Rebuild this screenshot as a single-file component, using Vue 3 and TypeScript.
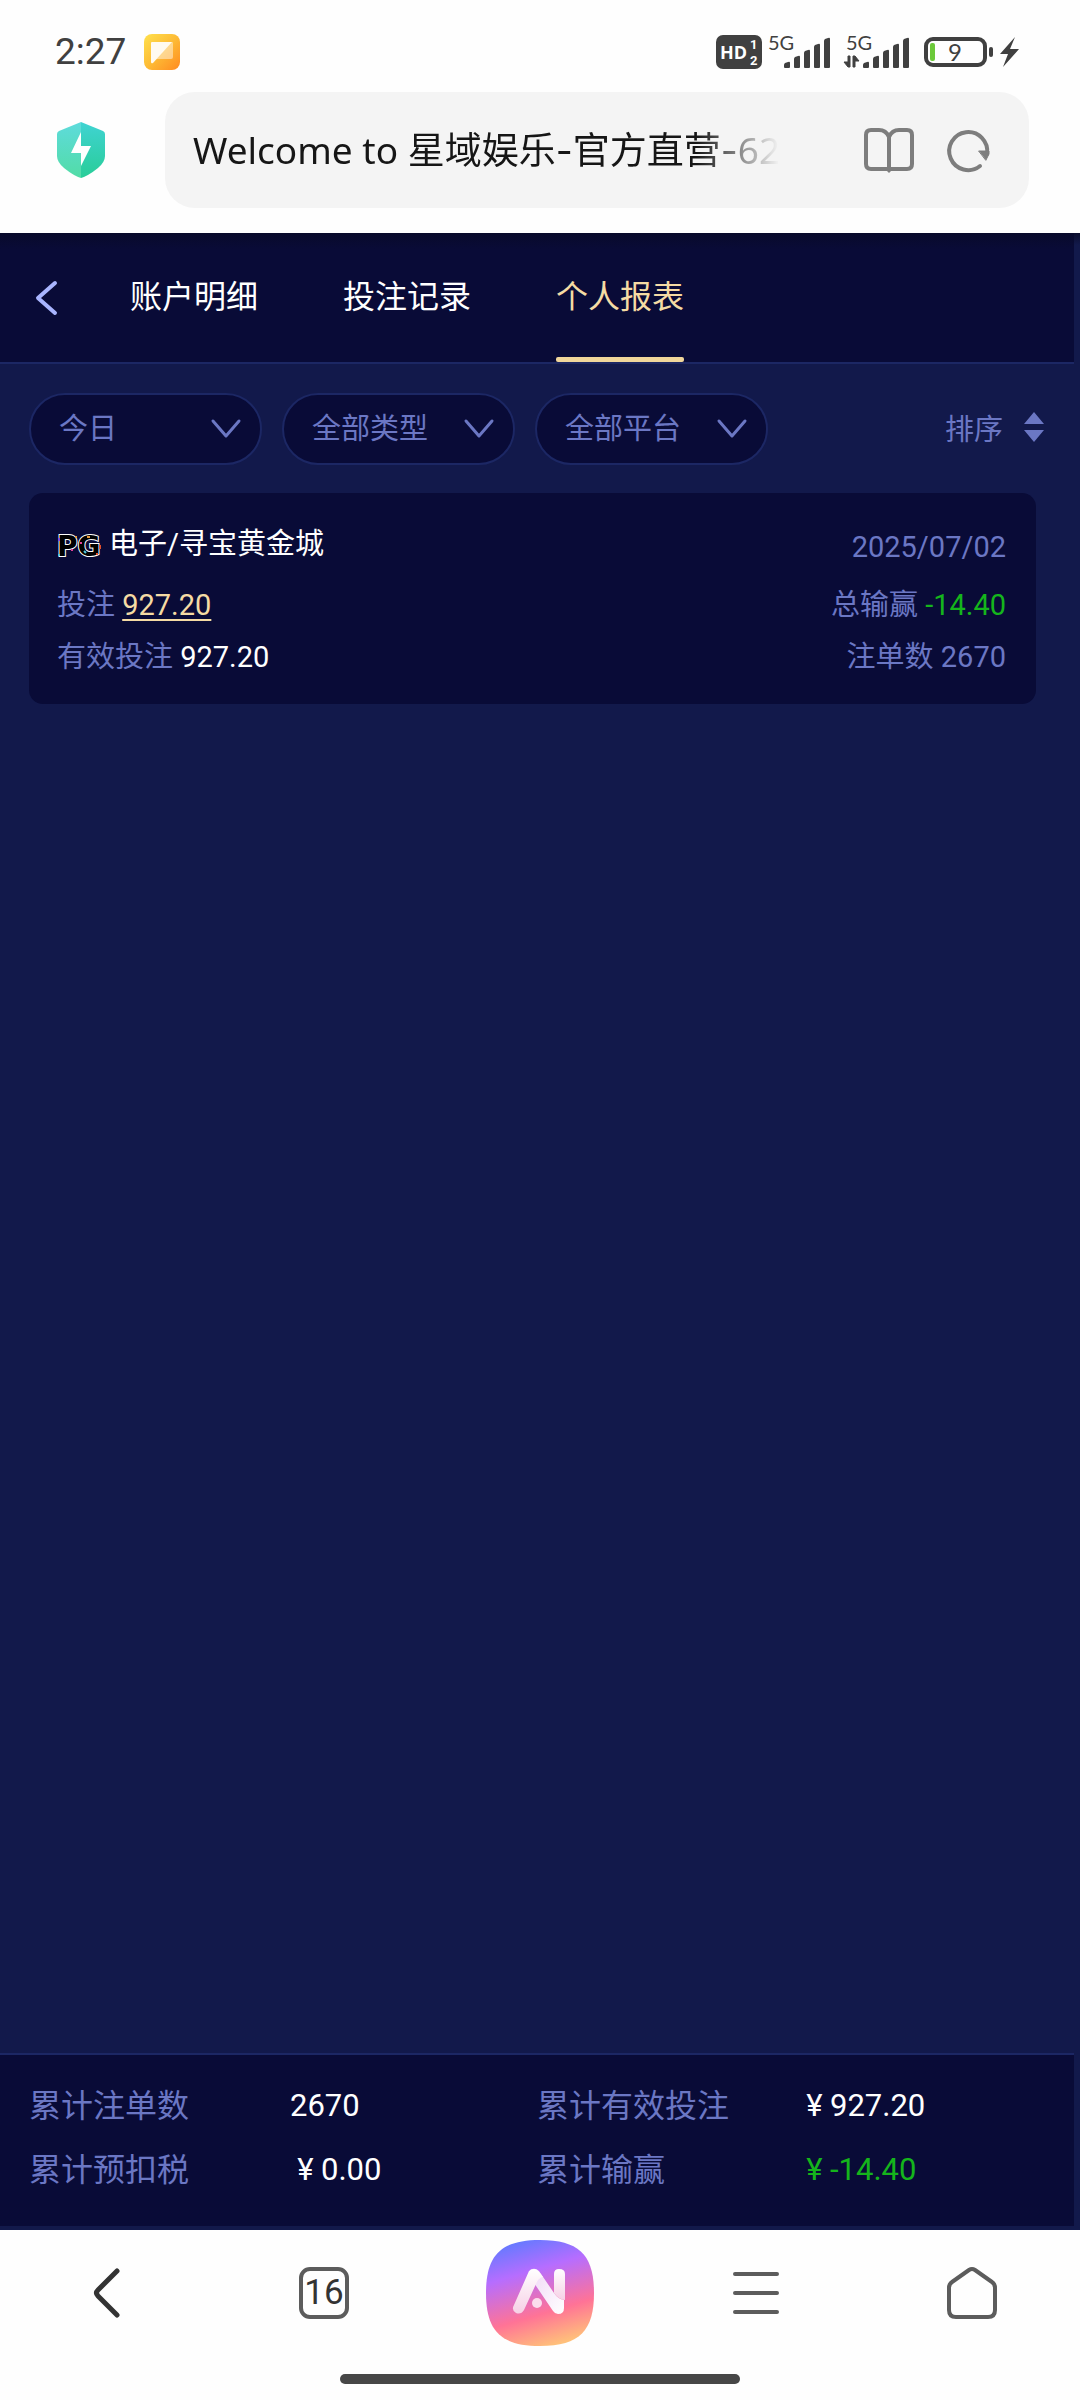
<script setup lang="ts">
import { ref } from 'vue'

interface Filter {
  id: string
  label: string
  options: string[]
}

interface Total {
  label: string
  value: string
  money?: boolean
  loss?: boolean
}

const tabs: string[] = ['账户明细', '投注记录', '个人报表']
const activeTab = ref(2)

const filters: Filter[] = [
  { id: 'period', label: '时间', options: ['今日'] },
  { id: 'kind', label: '类型', options: ['全部类型'] },
  { id: 'platform', label: '平台', options: ['全部平台'] },
]

const totals: Total[] = [
  { label: '累计注单数', value: '2670' },
  { label: '累计有效投注', value: '927.20', money: true },
  { label: '累计预扣税', value: '0.00', money: true },
  { label: '累计输赢', value: '-14.40', money: true, loss: true },
]

const barTops: number[] = [25, 19, 13, 7, 1]
const bar = (i: number): string => {
  const x = i * 10
  const top = barTops[i]
  return `M${x} 31V${top + 3}q0-1 1-2L${x + 4} ${top}q2-1 2 1V30q0 1-1 1H${x + 1}q-1 0-1-1z`
}
</script>

<template>
  <div class="screen">
    <header class="status">
      <div class="status-side">
        <time class="clock">2:27</time>
        <svg class="note" width="36" height="36" viewBox="0 0 36 36" aria-hidden="true">
          <defs>
            <linearGradient id="note" x1="0" y1="0" x2="1" y2="1">
              <stop offset="0" stop-color="#ffe14d" />
              <stop offset="0.5" stop-color="#fdbb35" />
              <stop offset="1" stop-color="#ff8a20" />
            </linearGradient>
          </defs>
          <rect width="36" height="36" rx="8" fill="url(#note)" />
          <path d="M27 8h1q1 0 1 1v14q0 2-2 2H12z" fill="#fff" opacity="0.45" />
          <path d="M8 8h20L9 29q-2 1-2-1V9q0-1 1-1z" fill="#fffaf0" />
        </svg>
      </div>
      <svg class="signals" width="304" height="36" viewBox="0 0 304 36" role="img" aria-label="5G, 9%">
        <rect x="0" y="1" width="46" height="34" rx="7" fill="#404040" />
        <text x="4" y="25" class="hd">HD</text>
        <text x="34" y="15" class="hd-small">1</text>
        <text x="34" y="31" class="hd-small">2</text>
        <text x="52" y="16" class="net">5G</text>
        <g transform="translate(68 3)" fill="#404040"><path v-for="(_, i) in barTops" :key="i" :d="bar(i)" /></g>
        <text x="130" y="16" class="net">5G</text>
        <path d="M128 28h4v-6h2v11h-2zM137 33V22h2l4 5h-4v6z" fill="#404040" stroke="#404040" />
        <g transform="translate(147 3)" fill="#404040"><path v-for="(_, i) in barTops" :key="i" :d="bar(i)" /></g>
        <rect x="210" y="5" width="59" height="26" rx="7" fill="none" stroke="#404040" stroke-width="4" />
        <rect x="214" y="9" width="5" height="18" rx="2" fill="#6cc93a" />
        <text x="239" y="27" class="level">9</text>
        <rect x="273" y="13" width="4" height="10" rx="2" fill="#404040" />
        <path d="M299 3L284 20h8l-5 13 16-18h-9z" fill="#404040" />
      </svg>
    </header>

    <div class="address">
      <svg class="shield" width="48" height="56" viewBox="0 0 48 56" aria-hidden="true">
        <defs>
          <linearGradient id="sl" x1="0" y1="0" x2="0" y2="1">
            <stop offset="0" stop-color="#5edbdc" />
            <stop offset="1" stop-color="#52dca6" />
          </linearGradient>
          <linearGradient id="sr" x1="0" y1="0" x2="0" y2="1">
            <stop offset="0" stop-color="#40d3d2" />
            <stop offset="1" stop-color="#28cd98" />
          </linearGradient>
        </defs>
        <path d="M24 0L2 9q-2 1-2 3v22q0 6 7 12 10 8 17 10z" fill="url(#sl)" />
        <path d="M24 0l22 9q2 1 2 3v22q0 6-7 12-10 8-17 10z" fill="url(#sr)" />
        <path d="M24 10L14 31h10v13l10-20H24z" fill="#fff" />
      </svg>
      <div class="field">
        <button type="button" class="page-title">Welcome to 星域娱乐<span class="dash">-</span>官方直营<span class="dash">-</span>62</button>
        <button type="button" class="icon" aria-label="阅读模式">
          <svg width="50" height="46" viewBox="0 0 50 46" fill="none" stroke="#7d7d7d" stroke-width="4" stroke-linejoin="round">
            <path d="M25 9Q22 2 15 2H7Q2 2 2 7V36Q2 41 7 41H43Q48 41 48 36V7Q48 2 43 2H35Q28 2 25 9zM25 8V42" />
            <path d="M21 41h8l-4 4z" fill="#7d7d7d" stroke="none" />
          </svg>
        </button>
        <button type="button" class="icon" aria-label="刷新">
          <svg width="44" height="44" viewBox="0 0 44 44" fill="none" stroke="#7d7d7d" stroke-width="4" stroke-linecap="round">
            <path d="M33 37A19 19 0 1 1 40 25" />
            <path d="M32 22h10v3l-3 6z" fill="#7d7d7d" stroke-width="1" stroke-linejoin="round" />
          </svg>
        </button>
      </div>
    </div>

    <main class="page">
      <nav class="tabs">
        <button type="button" class="back" aria-label="返回">
          <svg width="24" height="36" viewBox="0 0 24 36" fill="none" stroke="#a9b5ff" stroke-width="4" stroke-linecap="round" stroke-linejoin="round">
            <path d="M21 3L4 18l17 15" />
          </svg>
        </button>
        <button
          v-for="(tab, i) in tabs"
          :key="tab"
          type="button"
          class="tab"
          :class="{ active: i === activeTab }"
          @click="activeTab = i"
        >{{ tab }}</button>
      </nav>

      <div class="filters">
        <label v-for="f in filters" :key="f.id" class="pill">
          <select :id="f.id" :aria-label="f.label">
            <option v-for="o in f.options" :key="o">{{ o }}</option>
          </select>
          <svg class="chevron" width="32" height="20" viewBox="0 0 32 20" fill="none" stroke="#6b77c4" stroke-width="3" stroke-linecap="round" stroke-linejoin="round">
            <path d="M3 2l13 15L29 2" />
          </svg>
        </label>
        <button type="button" class="sort">
          排序
          <svg width="20" height="30" viewBox="0 0 20 30" fill="#6b77c4" aria-hidden="true">
            <path d="M10 0l10 12H0zM0 18h20L10 30z" />
          </svg>
        </button>
      </div>

      <section class="list">
        <article class="card">
          <div class="row first">
            <h2 class="game">
              <svg class="brand" width="46" height="24" viewBox="0 0 46 24" role="img" aria-label="PG">
                <text x="0" y="22" class="brand-text">PG</text>
                <g stroke-width="2">
                  <path d="M18 3h2M30 3h3" stroke="#e89a3c" />
                  <path d="M2 4v3" stroke="#7a4be0" />
                  <path d="M14 16h2M24 8v2" stroke="#e0409a" />
                  <path d="M2 20v2M27 17l2 2" stroke="#4fc7d9" />
                  <path d="M43 11v4M39 20h2" stroke="#e0502c" />
                </g>
              </svg>
              电子/寻宝黄金城
            </h2>
            <time class="date">2025/07/02</time>
          </div>
          <div class="row">
            <span>投注 <a href="#" class="stake">927.20</a></span>
            <span>总输赢 <b class="loss">-14.40</b></span>
          </div>
          <div class="row">
            <span>有效投注 <b class="plain">927.20</b></span>
            <span>注单数 2670</span>
          </div>
        </article>
      </section>

      <footer class="totals">
        <dl>
          <template v-for="t in totals" :key="t.label">
            <dt>{{ t.label }}</dt>
            <dd :class="{ loss: t.loss }"><span v-if="t.money" class="yen">¥</span>{{ t.value }}</dd>
          </template>
        </dl>
      </footer>
    </main>

    <nav class="toolbar">
      <div class="tools">
        <button type="button" aria-label="后退">
          <svg width="52" height="56" viewBox="0 0 52 56" fill="none" stroke="#333" stroke-width="5" stroke-linecap="round" stroke-linejoin="round">
            <path d="M35 6L16 25q-3 3 0 6L35 50" />
          </svg>
        </button>
        <button type="button" aria-label="标签页"><span class="count">16</span></button>
        <button type="button" aria-label="AI">
          <svg width="108" height="106" viewBox="0 0 108 106">
            <defs>
              <linearGradient id="ai" x1="0.3" y1="0" x2="0.6" y2="1">
                <stop offset="0" stop-color="#637aff" />
                <stop offset="0.3" stop-color="#b66dff" />
                <stop offset="0.7" stop-color="#ff7396" />
                <stop offset="1" stop-color="#ffc07a" />
              </linearGradient>
              <linearGradient id="leg" x1="0" y1="0" x2="0" y2="1">
                <stop offset="0" stop-color="#fff" />
                <stop offset="1" stop-color="#f6d0e6" />
              </linearGradient>
              <linearGradient id="arm" x1="0" y1="0" x2="1" y2="1">
                <stop offset="0" stop-color="#f0d6f6" />
                <stop offset="1" stop-color="#fff" />
              </linearGradient>
            </defs>
            <path d="M54 0C94 0 108 16 108 53S94 106 54 106 0 90 0 53 14 0 54 0z" fill="url(#ai)" />
            <path d="M68 34q0-5 5-5 6 0 6 5V60q-6 0-11-7z" fill="url(#leg)" />
            <path d="M44 30q5-3 9 1L68 53Q72 59 78 60V68q0 6-6 6-3 0-5-3L46 40z" fill="url(#arm)" />
            <path d="M43 31q6-5 11 2L57 37q-5 1-7 7L38 70q-3 5-8 3-5-3-2-8z" fill="url(#leg)" />
            <circle cx="51" cy="63" r="5" fill="#fbdcec" />
          </svg>
        </button>
        <button type="button" aria-label="菜单">
          <svg width="46" height="42" viewBox="0 0 46 42" stroke="#5c5c5c" stroke-width="4" stroke-linecap="round">
            <path d="M2 2h42M2 21h42M2 40h42" />
          </svg>
        </button>
        <button type="button" aria-label="主页">
          <svg width="50" height="52" viewBox="0 0 50 52" fill="none" stroke="#5c5c5c" stroke-width="4" stroke-linejoin="round">
            <path d="M22 3q3-2 6 0L45 15q3 2 3 6V43q0 7-7 7H9q-7 0-7-7V21q0-4 3-6z" />
          </svg>
        </button>
      </div>
      <div class="gesture"></div>
    </nav>
  </div>
</template>

<style>
body {
  background: #fefefe;
}
</style>

<style scoped>
.screen {
  display: flex;
  flex-direction: column;
  min-height: 100vh;
  font-family: Roboto, 'Noto Sans CJK SC', sans-serif;
  font-size: 29px;
  color: #6b77c4;
}

button,
select {
  margin: 0;
  padding: 0;
  border: 0;
  background: none;
  color: inherit;
  font: inherit;
}

svg {
  display: block;
  flex: none;
  overflow: visible;
}

.status {
  display: flex;
  align-items: center;
  justify-content: space-between;
  height: 36px;
  padding: 34px 60px 22px 55px;
}

.status-side {
  display: flex;
  align-items: center;
  gap: 18px;
}

.clock {
  font: 37px/36px Roboto, sans-serif;
  color: #404040;
}

.hd {
  font: bold 18px 'Open Sans', sans-serif;
  fill: #fff;
}

.hd-small {
  font: bold 13px Roboto, sans-serif;
  fill: #fff;
}

.net {
  font: 20px Lato, sans-serif;
  fill: #404040;
}

.level {
  font: 24px Lato, sans-serif;
  fill: #404040;
  text-anchor: middle;
}

.address {
  display: flex;
  align-items: center;
  gap: 60px;
  padding: 0 51px 25px 57px;
}

.field {
  flex: 1;
  min-width: 0;
  display: flex;
  align-items: center;
  height: 116px;
  padding: 0 38px 0 28px;
  border-radius: 30px;
  background: #f4f4f4;
}

.page-title {
  flex: 1;
  min-width: 0;
  margin-right: 85px;
  overflow: hidden;
  color: #161616;
  font: 37px/54px 'Noto Sans', 'Noto Sans CJK SC', sans-serif;
  text-align: left;
  white-space: nowrap;
  mask-image: linear-gradient(to right, #000 86%, transparent 100%);
}

.dash {
  font-family: Inter, sans-serif;
}

.icon {
  padding-top: 2px;
}

.icon + .icon {
  margin-left: 33px;
}

.page {
  flex: 1;
  display: flex;
  flex-direction: column;
  padding: 0 6px 4px 0;
  background: linear-gradient(#0b0d2c, #12194b 12px);
}

.tabs {
  display: flex;
  height: 129px;
  padding-left: 34px;
  border-bottom: 2px solid #1c2764;
  background: linear-gradient(#080a2b, #090b37 16px);
  color: #fff;
}

.back {
  margin-right: 72px;
}

.tab {
  margin-right: 85px;
  padding-bottom: 8px;
  font-size: 32px;
}

.tab.active {
  position: relative;
  color: #f5dba4;
}

.tab.active::after {
  content: '';
  position: absolute;
  left: 0;
  right: 0;
  bottom: 0;
  height: 5px;
  border-radius: 2px;
  background: #f0d69b;
}

.filters {
  display: flex;
  gap: 20px;
  padding: 29px 30px 28px 29px;
}

.pill {
  display: grid;
  align-items: center;
  width: 233px;
}

.pill > * {
  grid-area: 1 / 1;
}

.pill select {
  width: 100%;
  height: 72px;
  padding-left: 28px;
  border: 2px solid #1c2764;
  border-radius: 36px;
  background: #090b37;
  appearance: none;
}

.chevron {
  justify-self: end;
  margin-right: 20px;
  pointer-events: none;
}

.sort {
  display: flex;
  align-items: center;
  gap: 21px;
  margin-left: auto;
  padding-bottom: 4px;
}

.list {
  flex: 1;
  padding: 0 38px 0 29px;
}

.card {
  padding: 25px 30px 21px 28px;
  border-radius: 14px;
  background: #090b37;
}

.row {
  display: flex;
  justify-content: space-between;
  align-items: flex-start;
  line-height: 52px;
}

.row.first {
  margin-bottom: 6px;
}

.game {
  display: flex;
  align-items: center;
  gap: 6px;
  margin: 0;
  color: #fff;
  font-size: 29px;
  font-weight: 400;
}

.brand {
  margin-top: 4px;
}

.brand-text {
  font: bold 28px 'DejaVu Sans', sans-serif;
  fill: #000;
  stroke: #fff;
  stroke-width: 2px;
  paint-order: stroke;
}

.date {
  padding-top: 3px;
}

.stake {
  color: #f5dba4;
  text-underline-offset: 4px;
}

.plain {
  color: #fff;
  font-weight: 400;
}

.loss {
  color: #15b51c;
  font-weight: 400;
}

.totals {
  border-top: 2px solid #1c2764;
  background: #090b37;
}

.totals dl {
  display: grid;
  grid-template-columns: 261fr 247fr 262fr 245fr;
  margin: 0;
  padding: 19px 30px 24px 29px;
  line-height: 64px;
}

.totals dt {
  font-size: 32px;
}

.totals dd {
  margin: 0;
  color: #fff;
  font-size: 31px;
}

.totals dd.loss {
  color: #15b51c;
}

.yen {
  display: inline-block;
  width: 31px;
  text-align: center;
}

.toolbar {
  padding: 9px 0 16px;
}

.tools {
  display: grid;
  grid-template-columns: repeat(5, 1fr);
  align-items: center;
  justify-items: center;
  height: 108px;
}

.count {
  display: block;
  box-sizing: border-box;
  width: 50px;
  height: 52px;
  border: 4px solid #5c5c5c;
  border-radius: 11px;
  color: #333;
  font-size: 35px;
  line-height: 44px;
}

.gesture {
  width: 37%;
  height: 10px;
  margin: 27px auto 0;
  border-radius: 5px;
  background: #474747;
}
</style>
